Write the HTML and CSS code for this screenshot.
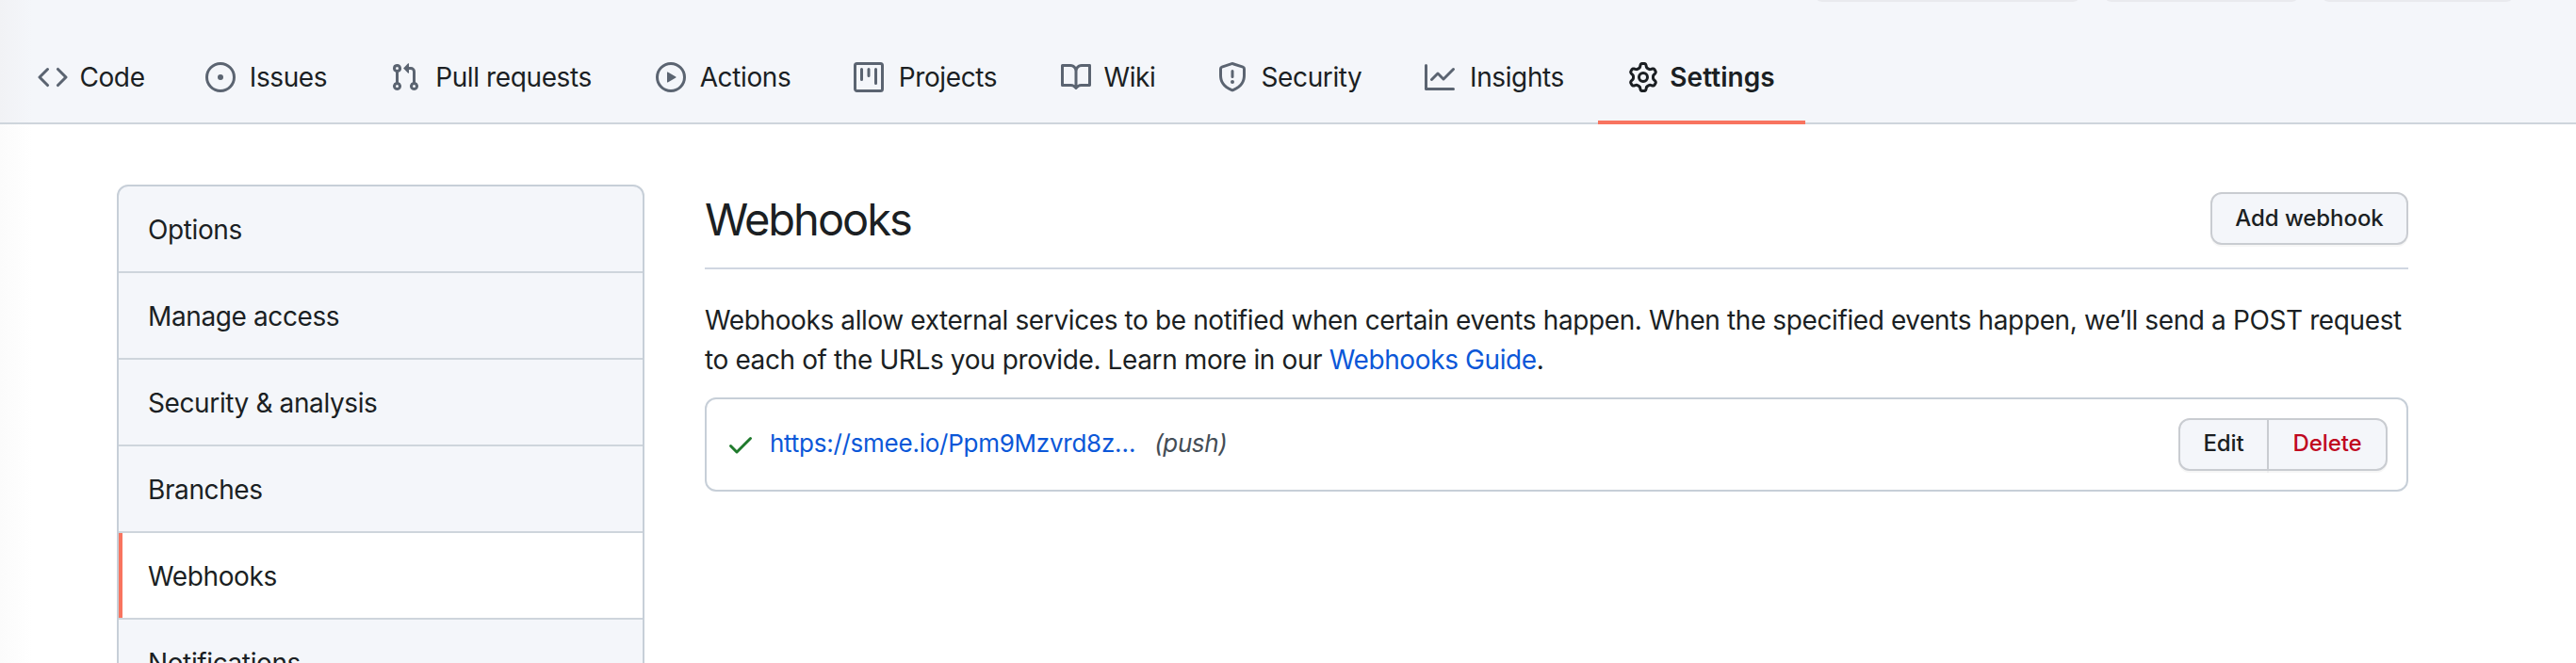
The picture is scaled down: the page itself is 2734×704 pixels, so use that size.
FILE: index.html
```html
<!DOCTYPE html>
<html lang="en">
<head>
<meta charset="utf-8">
<title>Webhooks</title>
<link rel="stylesheet" href="styles.css">
</head>
<body>
<header class="header">
  <div class="repo-actions"><span class="chip chip-a"></span><span class="chip chip-b"></span><span class="chip chip-c"></span></div>
  <nav class="tabs">
    <a class="tab t-code"><svg class="icon" viewBox="0 0 16 16"><path fill-rule="evenodd" d="M4.72 3.22a.75.75 0 011.06 1.06L2.06 8l3.72 3.72a.75.75 0 11-1.06 1.06L.47 8.53a.75.75 0 010-1.06l4.25-4.25zm6.56 0a.75.75 0 10-1.06 1.06L13.94 8l-3.72 3.72a.75.75 0 101.06 1.06l4.25-4.25a.75.75 0 000-1.06l-4.25-4.25z"/></svg><span class="label">Code</span></a>
    <a class="tab t-issues"><svg class="icon" viewBox="0 0 16 16"><path d="M8 9.5a1.5 1.5 0 100-3 1.5 1.5 0 000 3z"/><path fill-rule="evenodd" d="M8 0a8 8 0 100 16A8 8 0 008 0zM1.5 8a6.5 6.5 0 1113 0 6.5 6.5 0 01-13 0z"/></svg><span class="label">Issues</span></a>
    <a class="tab t-pulls"><svg class="icon" viewBox="0 0 16 16"><path fill-rule="evenodd" d="M7.177 3.073L9.573.677A.25.25 0 0110 .854v4.792a.25.25 0 01-.427.177L7.177 3.427a.25.25 0 010-.354zM3.75 2.5a.75.75 0 100 1.5.75.75 0 000-1.5zm-2.25.75a2.25 2.25 0 113 2.122v5.256a2.251 2.251 0 11-1.5 0V5.372A2.25 2.25 0 011.5 3.25zM11 2.5h-1V4h1a1 1 0 011 1v5.628a2.251 2.251 0 101.5 0V5A2.5 2.5 0 0011 2.5zm1 10.25a.75.75 0 111.5 0 .75.75 0 01-1.5 0zM3.75 12a.75.75 0 100 1.5.75.75 0 000-1.5z"/></svg><span class="label">Pull requests</span></a>
    <a class="tab t-actions"><svg class="icon" viewBox="0 0 16 16"><path fill-rule="evenodd" d="M1.5 8a6.5 6.5 0 1113 0 6.5 6.5 0 01-13 0zM8 0a8 8 0 100 16A8 8 0 008 0zM6.379 5.227A.25.25 0 006 5.442v5.117a.25.25 0 00.379.214l4.264-2.559a.25.25 0 000-.428L6.379 5.227z"/></svg><span class="label">Actions</span></a>
    <a class="tab t-projects"><svg class="icon" viewBox="0 0 16 16"><path fill-rule="evenodd" d="M1.75 0A1.75 1.75 0 000 1.75v12.5C0 15.216.784 16 1.75 16h12.5A1.75 1.75 0 0016 14.25V1.75A1.75 1.75 0 0014.25 0H1.75zM1.5 1.75a.25.25 0 01.25-.25h12.5a.25.25 0 01.25.25v12.5a.25.25 0 01-.25.25H1.75a.25.25 0 01-.25-.25V1.75zM11.75 3a.75.75 0 00-.75.75v7.5a.75.75 0 001.5 0v-7.5a.75.75 0 00-.75-.75zm-8.25.75a.75.75 0 011.5 0v5.5a.75.75 0 01-1.5 0v-5.5zM8 3a.75.75 0 00-.75.75v3.5a.75.75 0 001.5 0v-3.5A.75.75 0 008 3z"/></svg><span class="label">Projects</span></a>
    <a class="tab t-wiki"><svg class="icon" viewBox="0 0 16 16"><path fill-rule="evenodd" d="M0 1.75A.75.75 0 01.75 1h4.253c1.227 0 2.317.59 3 1.501A3.744 3.744 0 0111.006 1h4.245a.75.75 0 01.75.75v10.5a.75.75 0 01-.75.75h-4.507a2.25 2.25 0 00-1.591.659l-.622.621a.75.75 0 01-1.06 0l-.622-.621A2.25 2.25 0 005.258 13H.75a.75.75 0 01-.75-.75V1.75zm8.755 3a2.25 2.25 0 012.25-2.25H14.5v9h-3.757c-.71 0-1.4.201-1.992.572l.004-7.322zm-1.504 7.324l.004-5.073-.002-2.253A2.25 2.25 0 005.003 2.5H1.5v9h3.757a3.75 3.75 0 011.994.574z"/></svg><span class="label">Wiki</span></a>
    <a class="tab t-security"><svg class="icon" viewBox="0 0 16 16"><path fill-rule="evenodd" d="M7.467.133a1.75 1.75 0 011.066 0l5.25 1.68A1.75 1.75 0 0115 3.48V7c0 1.566-.32 3.182-1.303 4.682-.983 1.498-2.585 2.813-5.032 3.855a1.7 1.7 0 01-1.33 0c-2.447-1.042-4.049-2.357-5.032-3.855C1.32 10.182 1 8.566 1 7V3.48a1.75 1.75 0 011.217-1.667l5.25-1.68zm.61 1.429a.25.25 0 00-.153 0l-5.25 1.68a.25.25 0 00-.174.238V7c0 1.358.275 2.666 1.057 3.86.784 1.194 2.121 2.34 4.366 3.297a.2.2 0 00.154 0c2.245-.956 3.582-2.104 4.366-3.298C13.225 9.666 13.5 8.36 13.5 7V3.48a.25.25 0 00-.174-.237l-5.25-1.68zM9 10.5a1 1 0 11-2 0 1 1 0 012 0zm-.25-5.75a.75.75 0 10-1.5 0v3a.75.75 0 001.5 0v-3z"/></svg><span class="label">Security</span></a>
    <a class="tab t-insights"><svg class="icon" viewBox="0 0 16 16"><path fill-rule="evenodd" d="M1.5 1.75a.75.75 0 00-1.5 0v12.5c0 .414.336.75.75.75h14.5a.75.75 0 000-1.5H1.5V1.75zm14.28 2.53a.75.75 0 00-1.06-1.06L10 7.94 7.53 5.47a.75.75 0 00-1.06 0L3.22 8.72a.75.75 0 001.06 1.06L7 7.06l2.47 2.47a.75.75 0 001.06 0l5.25-5.25z"/></svg><span class="label">Insights</span></a>
    <a class="tab t-settings selected"><svg class="icon" viewBox="0 0 16 16"><path fill-rule="evenodd" d="M7.429 1.525a6.593 6.593 0 011.142 0c.036.003.108.036.137.146l.289 1.105c.147.56.55.967.997 1.189.174.086.341.183.501.29.417.278.97.423 1.53.27l1.102-.303c.11-.03.175.016.195.046.219.31.41.641.573.989.014.031.022.11-.059.19l-.815.806c-.411.406-.562.957-.53 1.456a4.588 4.588 0 010 .582c-.032.499.119 1.05.53 1.456l.815.806c.08.08.073.159.059.19a6.494 6.494 0 01-.573.99c-.02.029-.086.074-.195.045l-1.103-.303c-.559-.153-1.112-.008-1.529.27-.16.107-.327.204-.5.29-.449.222-.851.628-.998 1.189l-.289 1.105c-.029.11-.101.143-.137.146a6.613 6.613 0 01-1.142 0c-.036-.003-.108-.037-.137-.146l-.289-1.105c-.147-.56-.55-.967-.997-1.189a4.502 4.502 0 01-.501-.29c-.417-.278-.97-.423-1.53-.27l-1.102.303c-.11.03-.175-.016-.195-.046a6.492 6.492 0 01-.573-.989c-.014-.031-.022-.11.059-.19l.815-.806c.411-.406.562-.957.53-1.456a4.587 4.587 0 010-.582c.032-.499-.119-1.05-.53-1.456l-.815-.806c-.08-.08-.073-.159-.059-.19a6.44 6.44 0 01.573-.99c.02-.029.086-.075.195-.045l1.103.303c.559.153 1.112.008 1.529-.27.16-.107.327-.204.5-.29.449-.222.851-.628.998-1.189l.289-1.105c.029-.11.101-.143.137-.146zM8 0c-.236 0-.47.01-.701.03-.743.065-1.29.615-1.458 1.261l-.29 1.106c-.017.066-.078.158-.211.224a5.994 5.994 0 00-.668.386c-.123.082-.233.09-.3.071L3.27 2.776c-.644-.177-1.392.02-1.82.63a7.977 7.977 0 00-.704 1.217c-.315.675-.111 1.422.363 1.891l.815.806c.05.048.098.147.088.294a6.084 6.084 0 000 .772c.01.147-.038.246-.088.294l-.815.806c-.474.469-.678 1.216-.363 1.891.2.428.436.835.704 1.218.428.609 1.176.806 1.82.63l1.103-.303c.066-.019.176-.011.299.071.213.143.436.272.668.386.133.066.194.158.212.224l.289 1.106c.169.646.715 1.196 1.458 1.26a8.094 8.094 0 001.402 0c.743-.064 1.29-.614 1.458-1.26l.29-1.106c.017-.066.078-.158.211-.224a5.98 5.98 0 00.668-.386c.123-.082.233-.09.3-.071l1.102.302c.644.177 1.392-.02 1.82-.63.268-.382.505-.789.704-1.217.315-.675.111-1.422-.364-1.891l-.814-.806c-.05-.048-.098-.147-.088-.294a6.1 6.1 0 000-.772c-.01-.147.039-.246.088-.294l.814-.806c.475-.469.679-1.216.364-1.891a7.992 7.992 0 00-.704-1.218c-.428-.609-1.176-.806-1.82-.63l-1.103.303c-.066.019-.176.011-.299-.071a5.991 5.991 0 00-.668-.386c-.133-.066-.194-.158-.212-.224L10.16 1.29C9.99.645 9.444.095 8.701.031A8.094 8.094 0 008 0zm1.5 8a1.5 1.5 0 11-3 0 1.5 1.5 0 013 0zM11 8a3 3 0 11-6 0 3 3 0 016 0z"/></svg><span class="label">Settings</span></a>
  </nav>
</header>
<div class="page">
  <aside class="menu">
    <a class="menu-item">Options</a>
    <a class="menu-item">Manage access</a>
    <a class="menu-item">Security &amp; analysis</a>
    <a class="menu-item">Branches</a>
    <a class="menu-item current">Webhooks</a>
    <a class="menu-item">Notifications</a>
  </aside>
  <main class="main">
    <div class="subhead">
      <h2 class="title">Webhooks</h2>
      <button class="btn btn-add">Add webhook</button>
    </div>
    <p class="intro">Webhooks allow external services to be notified when certain events happen. When the specified events happen, we’ll send a POST request<br>to each of the URLs you provide. Learn more in our <a class="link">Webhooks Guide</a>.</p>
    <div class="hook">
      <svg class="icon check" viewBox="0 0 16 16"><path fill-rule="evenodd" d="M13.78 4.22a.75.75 0 010 1.06l-7.25 7.25a.75.75 0 01-1.06 0L2.22 9.28a.75.75 0 011.06-1.06L6 10.94l6.72-6.72a.75.75 0 011.06 0z"/></svg>
      <a class="link hook-url">https://smee.io/Ppm9Mzvrd8z…</a>
      <em class="events">(push)</em>
      <div class="group"><button class="btn btn-edit">Edit</button><button class="btn btn-delete">Delete</button></div>
    </div>
  </main>
</div>
</body>
</html>
```
FILE: styles.css
```css
* { box-sizing: border-box; }
html, body { margin: 0; height: 704px; overflow: hidden; }
body {
  background: linear-gradient(90deg, #fbfbfb 0, #fff 34px);
  color: #1b1f23;
  font: 430 28px/42px Inter, "Liberation Sans", sans-serif;
  letter-spacing: -0.388px;
  white-space: nowrap;
}
.header {
  height: 132px;
  background: linear-gradient(90deg, #f1f2f5 0, #f4f6fa 34px);
  border-bottom: 2px solid #ced5dc;
}
.repo-actions { display: flex; height: 2px; padding-left: 1929px; }
.chip { height: 2px; background: #e9eaee; border-radius: 0 0 8px 8px / 0 0 2px 2px; }
.chip-a { width: 276px; margin-right: 31px; }
.chip-b { width: 201px; margin-right: 30px; }
.chip-c { width: 198px; }
.tabs { display: flex; padding-left: 8px; margin-top: 30px; height: 100px; }
.tab { display: flex; align-items: center; height: 100px; padding: 0 32px; flex: none; }
.tab.selected { border-bottom: 4px solid #f8745f; padding-top: 4px; font-weight: 610; letter-spacing: 0.05px; }
.icon { width: 32px; height: 32px; fill: #5b6471; flex: none; display: block; }
.selected .icon { fill: #1b1f23; }
.label { flex: 1; margin-left: 12px; text-align: center; }
.t-code { width: 178px; }
.t-issues { width: 196px; }
.t-pulls { width: 282px; }
.t-actions { width: 210px; }
.t-projects { width: 220px; }
.t-wiki { width: 166px; }
.t-security { width: 220px; }
.t-insights { width: 216px; }
.t-settings { width: 220px; }
.page { display: flex; gap: 64px; height: 572px; overflow: hidden; padding: 64px 0 0 124px; }
.menu {
  flex: none;
  align-self: flex-start;
  width: 560px;
  border: 2px solid #c7cfd8;
  border-radius: 12px;
  overflow: hidden;
  background: #f4f6fa;
}
.menu-item { display: block; height: 92px; padding: 25px 31px 23px; border-bottom: 2px solid #ced5dc; }
.menu-item.current { background: #fff; box-shadow: inset 4px 0 #f8745f; }
.main { width: 1808px; }
.subhead {
  display: flex;
  justify-content: space-between;
  align-items: center;
  height: 90px;
  padding-bottom: 16px;
  border-bottom: 2px solid #d0d6e1;
}
.title { margin: 0; padding-top: 2px; font-size: 47px; line-height: 70px; font-weight: 440; letter-spacing: -2px; }
.btn {
  height: 56px;
  margin: 0;
  padding: 0 0 1px;
  border: 2px solid #c9ccd1;
  border-radius: 12px;
  background: #f4f6fa;
  box-shadow: 0 2px 0 rgba(27, 31, 35, 0.04);
  color: #1b1f23;
  font: 540 24px/40px Inter, "Liberation Sans", sans-serif;
  letter-spacing: -0.08px;
}
.btn-add { width: 210px; }
.intro { margin: 33px 0 19px; }
.link { color: #0b57d8; }
.hook {
  display: flex;
  align-items: center;
  height: 100px;
  padding: 0 20px;
  border: 2px solid #c7cfd8;
  border-radius: 12px;
}
.check { fill: #1f7a2c; }
.hook-url { margin-left: 15px; padding-bottom: 2px; font-size: 26px; letter-spacing: -0.25px; }
.events { margin-left: 20px; padding-bottom: 2px; font-size: 26px; color: #444d56; letter-spacing: -0.4px; }
.group { display: flex; margin-left: auto; }
.group .btn { padding-bottom: 3px; }
.btn-edit { width: 96px; border-radius: 12px 0 0 12px; }
.group .btn-delete { width: 128px; margin-left: -2px; border-radius: 0 12px 12px 0; color: #c0081f; }
```
